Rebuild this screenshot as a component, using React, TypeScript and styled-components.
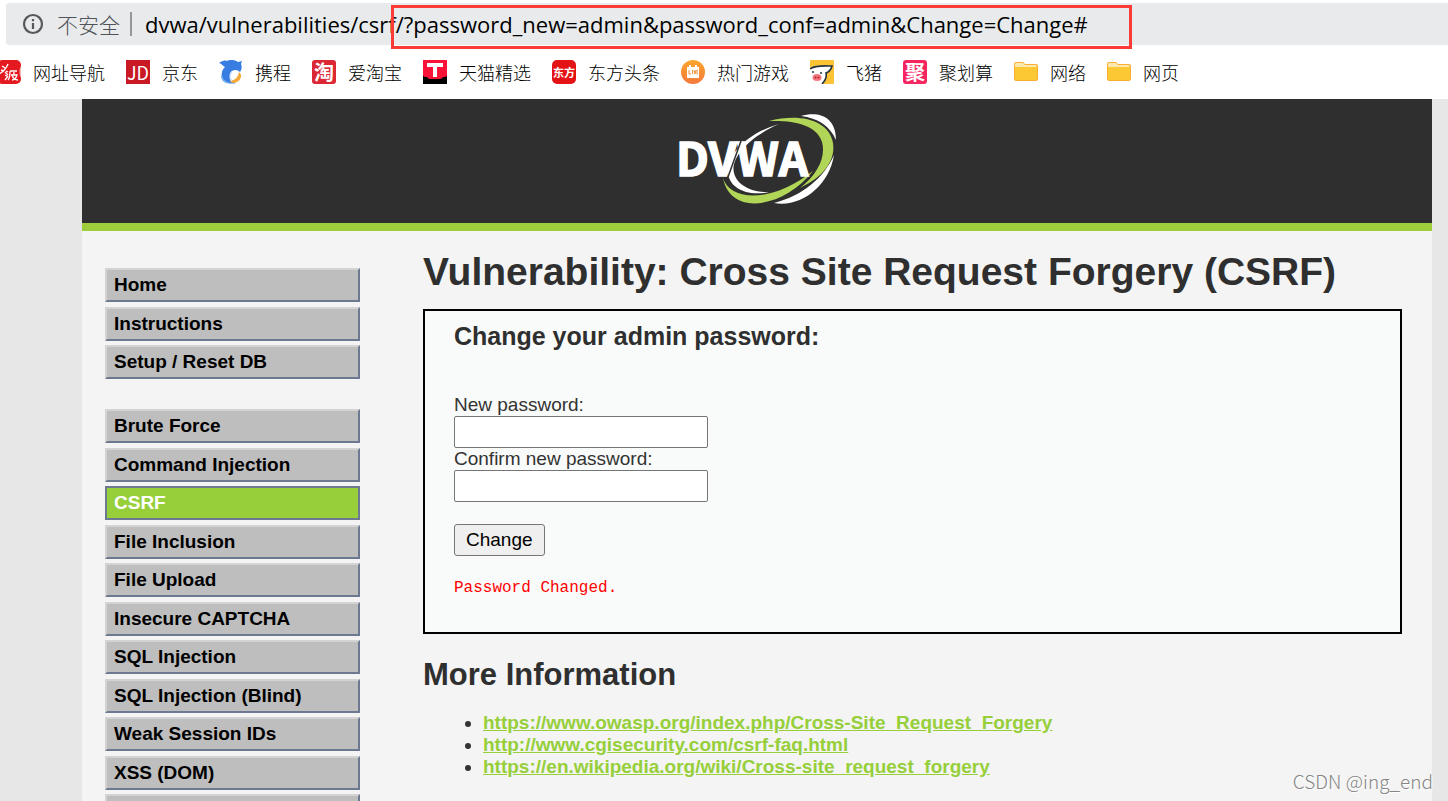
import React from "react";
import styled, { createGlobalStyle, css } from "styled-components";

const sans = `"Liberation Sans", Arial, sans-serif`;
const ui = `"Open Sans", "Noto Sans CJK SC", sans-serif`;
const cjk = `"Noto Sans CJK SC", sans-serif`;

const GlobalStyle = createGlobalStyle`
  *, *::before, *::after { box-sizing: border-box; }
  body { margin: 0; background: #e7e7e7; }
  h1, h2, h3, ul, p { margin: 0; padding: 0; }
`;

const Window = styled.div`
  height: 100vh;
  display: flex;
  flex-direction: column;
  overflow: hidden;
  position: relative;
`;

const BrowserBar = styled.header`
  flex: none;
  background: #fff;
  padding-top: 3px;
`;

const AddressRow = styled.div`
  display: flex;
  align-items: center;
  height: 42px;
  margin-left: 6px;
  padding-left: 16px;
  border-radius: 3px 0 0 3px;
  background: #e8eaeb;
  position: relative;
`;

const Security = styled.button`
  display: flex;
  align-items: center;
  gap: 13px;
  padding: 0;
  border: 0;
  background: none;
  color: #505357;
  font: 300 21px/28px ${cjk};
`;

const Divider = styled.span`
  width: 2px;
  height: 24px;
  margin: 0 13px 0 10px;
  background: #94979b;
`;

const Address = styled.input`
  flex: 1;
  min-width: 0;
  padding: 0;
  border: 0;
  outline: 0;
  background: none;
  color: #000;
  font: 22px/30px ${ui};
`;

const Highlight = styled.div`
  position: absolute;
  top: 2px;
  left: 385px;
  width: 741px;
  height: 44px;
  border: 3px solid #fb3b38;
  pointer-events: none;
`;

const Bookmarks = styled.nav`
  display: flex;
  align-items: center;
  gap: 21px;
  height: 54px;
  margin-left: -3px;
`;

const Bookmark = styled.a`
  display: flex;
  align-items: center;
  gap: 12px;
  flex: none;
  color: #000;
  text-decoration: none;
  font: 300 18px/26px ${cjk};
`;

const Tile = styled.span<{ $bg: string; $radius?: number; $size?: number; $weight?: number }>`
  display: flex;
  align-items: center;
  justify-content: center;
  width: 24px;
  height: 24px;
  white-space: nowrap;
  border-radius: ${(p) => p.$radius ?? 0}px;
  background: ${(p) => p.$bg};
  color: #fff;
  font: ${(p) => p.$weight ?? 700} ${(p) => p.$size ?? 18}px/24px ${cjk};
`;

const Site = styled.div`
  flex: 1;
  min-height: 0;
  display: flex;
  flex-direction: column;
  margin: 0 16px 0 82px;
  background: #f4f4f4;
`;

const Banner = styled.header`
  flex: none;
  display: flex;
  justify-content: center;
  height: 132px;
  padding-top: 15px;
  background: #2f2f2f;
  border-bottom: 8px solid #9fce3c;
`;

const Columns = styled.div`
  display: flex;
  flex: 1;
  min-height: 0;
  padding: 0 30px 0 23px;
`;

const Menu = styled.nav`
  flex: none;
  width: 255px;
  margin-right: 63px;
  padding-top: 37px;
`;

const MenuGroup = styled.ul`
  list-style: none;
  & + & { margin-top: 30px; }
`;

const MenuRow = styled.li`
  &:nth-child(odd):not(:last-child) { margin-bottom: 5px; }
  &:nth-child(even) { margin-bottom: 4px; }
`;

const MenuLink = styled.a<{ $active?: boolean }>`
  display: block;
  height: 34px;
  padding-left: 7px;
  border: 2px solid;
  border-color: #d3d3d3 #6d7990 #6d7990 #d3d3d3;
  background: #bebebe;
  color: #000;
  font: 700 19px/30px ${sans};
  text-decoration: none;
  ${(p) =>
    p.$active &&
    css`
      border-color: #6d7990;
      background: #96cf3a;
      color: #fff;
    `}
`;

const Main = styled.main`
  flex: 1;
  min-width: 0;
  padding-top: 19px;
  color: #333;
  font: 19px/22px ${sans};
`;

const Title = styled.h1`
  font-size: 39px;
  line-height: 44px;
  color: #2f2f2f;
  white-space: nowrap;
`;

const Panel = styled.section`
  margin-top: 15px;
  padding: 11px 29px 33px;
  border: 2px solid #000;
  background: #f9fbfa;
`;

const PanelTitle = styled.h3`
  margin-bottom: 44px;
  color: #2f2f2f;
  font-size: 25px;
  line-height: 28px;
`;

const Field = styled.label`
  display: block;
`;

const PasswordInput = styled.input`
  display: block;
  width: 254px;
  height: 32px;
  border: 1px solid #767676;
  border-radius: 2px;
  background: #fff;
`;

const Submit = styled.button`
  display: block;
  height: 32px;
  margin-top: 22px;
  padding: 0 11px;
  border: 1px solid #767676;
  border-radius: 3px;
  background: #efefef;
  color: #000;
  font: 19px/30px ${sans};
`;

const Message = styled.p`
  margin-top: 21px;
  color: #ff0000;
  font: 16px/22px "Liberation Mono", monospace;
`;

const SectionTitle = styled.h2`
  margin: 23px 0 19px;
  color: #2f2f2f;
  font-size: 31px;
  line-height: 36px;
`;

const Links = styled.ul`
  padding-left: 60px;
`;

const ExternalLink = styled.a`
  color: #96cf3a;
  font-weight: 700;
`;

const Watermark = styled.div`
  position: absolute;
  right: 15px;
  bottom: 8px;
  color: #858585;
  font: 300 19px/24px ${cjk};
  text-shadow: 1px 1px 0 #fff;
`;

const InfoIcon = () => (
  <svg width="22" height="22" viewBox="0 0 22 22" aria-hidden="true">
    <circle cx="11" cy="11" r="9" fill="none" stroke="#55585c" strokeWidth="2.2" />
    <path d="M11 10v6M11 6v2.2" stroke="#55585c" strokeWidth="2.2" />
  </svg>
);

const NewsIcon = () => (
  <svg width="24" height="24" viewBox="0 0 24 24" aria-hidden="true">
    <rect width="24" height="24" rx="5" fill="#e51a21" />
    <path d="M5 6l3 2M4 10l3 1M11 4C9 9 6 12 2 14M8 12l3 3" stroke="#fff" strokeWidth="1.4" fill="none" />
    <path d="M9 11l2 1M8 15l2 1M8 20l3-4M13 11h7M13 11c0 4 0 7-2 9M14 15h6c-1 3-3 5-5 5M15 15c1 3 3 5 6 5M17 12v3" stroke="#fff" strokeWidth="1.3" fill="none" />
    <path d="M24 6v12c-2-3-2-9 0-12" fill="#f8b4ad" />
  </svg>
);

const DolphinIcon = () => (
  <svg width="24" height="24" viewBox="0 0 24 24" aria-hidden="true">
    <path d="M0 3C3 1 5 0 8 1c4-2 8-1 11 1l4-1-1 3c1 2 1 5-1 8-2-2-5-3-8-1-3 2-2 6-1 8 1 2 3 3 5 4-6 2-13-1-14-7C2 12 4 9 6 7 4 6 2 3 0 3z" fill="#377de2" />
    <path d="M20 12c4 3 2 10-5 11-3 0-4-1-4-3 4 1 8-2 9-8z" fill="#f6a836" />
    <path d="M2 14c1 5 5 8 10 9-6 2-11-3-10-9z" fill="#71aef2" />
    <path d="M13 12c-3 3-2 7 0 9" fill="none" stroke="#d7e7fb" strokeWidth="1.5" />
  </svg>
);

const TmallIcon = () => (
  <svg width="24" height="24" viewBox="0 0 24 24" aria-hidden="true">
    <rect width="24" height="24" fill="#000" />
    <path d="M0 0h24v15c0 2-2 2-4 2-1 2-3 2-4 2H8c-1 0-3 0-4-2-2 0-4 0-4-2z" fill="#fb1239" />
    <path d="M4 3h16v4h-6v10h-4V7H4z" fill="#fff" />
  </svg>
);

const LiveIcon = () => (
  <svg width="24" height="24" viewBox="0 0 24 24" aria-hidden="true">
    <defs>
      <linearGradient id="live" x1="0" y1="0" x2="0" y2="1">
        <stop offset="0" stopColor="#fba62b" />
        <stop offset="1" stopColor="#f5793b" />
      </linearGradient>
    </defs>
    <circle cx="12" cy="12" r="12" fill="url(#live)" />
    <path d="M6 7h2V5h2v2h4V5h2v2h2v11H6z" fill="#fff" />
    <path d="M8 10v4h2M11.500 10v4M13 10l1 4 1-4M17 10h-1v4h1" fill="none" stroke="#f6923a" />
  </svg>
);

const PigIcon = () => (
  <svg width="24" height="24" viewBox="0 0 24 24" aria-hidden="true">
    <rect width="24" height="24" rx="1" fill="#fcc435" />
    <path d="M0 8c5-3 13-2 22-2-1 4-3 6-6 7 1 4-1 8-4 11H0z" fill="#fff" />
    <path d="M0 9c5-4 14-3 22-3-1 4-3 6-6 7 1 4-1 8-4 11" fill="none" stroke="#26333c" strokeWidth="1.6" />
    <ellipse cx="7" cy="17.500" rx="4.500" ry="3.500" fill="#f4777d" />
    <circle cx="5.500" cy="17.500" r="1" fill="#a82130" />
    <circle cx="8.500" cy="17.500" r="1" fill="#a82130" />
    <circle cx="3" cy="12" r="1" fill="#26333c" />
    <circle cx="11" cy="13" r="1" fill="#26333c" />
  </svg>
);

const FolderIcon = () => (
  <svg width="24" height="24" viewBox="0 0 24 24" aria-hidden="true">
    <path d="M0 4c0-1 1-2 2-2h7l2 2h11c1 0 2 1 2 2v13c0 1-1 2-2 2H2c-1 0-2-1-2-2z" fill="#f9ae32" />
    <path d="M1 5c0-1 0-2 1-2h7l2 2h11l1 2H1z" fill="#fde8b0" />
    <path d="M1 7h22v11c0 1 0 2-1 2H2c-1 0-1-1-1-2z" fill="#fcc934" />
  </svg>
);

const DvwaLogo = () => (
  <svg width="158" height="90" viewBox="0 0 158 90" role="img" aria-label="DVWA">
    <path d="M91 7C122-1 151 6 155 29C158 50 141 65 122 74C140 60 148 43 144 28C139 11 116 6 91 7z" fill="#b0d557" />
    <path d="M123 2C141-3 158 3 158 26C152 12 140 4 123 2z" fill="#fff" />
    <path d="M156 41C151 72 123 94 96 89C124 82 146 64 156 41z" fill="#fff" />
    <path d="M45 64C51 86 92 91 135 57C107 93 53 104 45 64z" fill="#b0d557" />
    <path d="M101 10C71 23 52 44 56 59C59 72 76 79 91 78C70 83 49 74 50 56C51 37 73 18 101 10z" fill="#fff" />
    <text
      x="-2"
      y="62"
      fill="#fff"
      stroke="#fff"
      strokeWidth="1.5"
      fontFamily="Noto Sans CJK SC, sans-serif"
      fontWeight="700"
      fontSize="46"
    >
      DVWA
    </text>
    <path d="M50 63L63 27" stroke="#2f2f2f" strokeWidth="1.5" />
  </svg>
);

const bookmarks: { label: string; icon: React.ReactNode }[] = [
  { label: "网址导航", icon: <NewsIcon /> },
  { label: "京东", icon: <Tile $bg="#c91925" $weight={400}>JD</Tile> },
  { label: "携程", icon: <DolphinIcon /> },
  { label: "爱淘宝", icon: <Tile $bg="#dc2735" $radius={3} $size={20}>淘</Tile> },
  { label: "天猫精选", icon: <TmallIcon /> },
  { label: "东方头条", icon: <Tile $bg="#e41416" $radius={5} $size={11}>东方</Tile> },
  { label: "热门游戏", icon: <LiveIcon /> },
  { label: "飞猪", icon: <PigIcon /> },
  { label: "聚划算", icon: <Tile $bg="#f5265f" $radius={3} $size={20}>聚</Tile> },
  { label: "网络", icon: <FolderIcon /> },
  { label: "网页", icon: <FolderIcon /> },
];

const menu: string[][] = [
  ["Home", "Instructions", "Setup / Reset DB"],
  [
    "Brute Force",
    "Command Injection",
    "CSRF",
    "File Inclusion",
    "File Upload",
    "Insecure CAPTCHA",
    "SQL Injection",
    "SQL Injection (Blind)",
    "Weak Session IDs",
    "XSS (DOM)",
    "",
  ],
];

const links = [
  "https://www.owasp.org/index.php/Cross-Site_Request_Forgery",
  "http://www.cgisecurity.com/csrf-faq.html",
  "https://en.wikipedia.org/wiki/Cross-site_request_forgery",
];

export default function App() {
  return (
    <Window>
      <GlobalStyle />
      <BrowserBar>
        <AddressRow>
          <Security type="button">
            <InfoIcon />
            不安全
          </Security>
          <Divider />
          <Address
            type="text"
            aria-label="Address"
            defaultValue="dvwa/vulnerabilities/csrf/?password_new=admin&password_conf=admin&Change=Change#"
          />
          <Highlight />
        </AddressRow>
        <Bookmarks>
          {bookmarks.map((b) => (
            <Bookmark href="#" key={b.label}>
              {b.icon}
              {b.label}
            </Bookmark>
          ))}
        </Bookmarks>
      </BrowserBar>
      <Site>
        <Banner>
          <DvwaLogo />
        </Banner>
        <Columns>
          <Menu>
            {menu.map((group) => (
              <MenuGroup key={group[0]}>
                {group.map((item) => (
                  <MenuRow key={item}>
                    <MenuLink href="#" $active={item === "CSRF"}>
                      {item}
                    </MenuLink>
                  </MenuRow>
                ))}
              </MenuGroup>
            ))}
          </Menu>
          <Main>
            <Title>Vulnerability: Cross Site Request Forgery (CSRF)</Title>
            <Panel>
              <PanelTitle>Change your admin password:</PanelTitle>
              <form onSubmit={(e) => e.preventDefault()}>
                <Field htmlFor="password-new">New password:</Field>
                <PasswordInput id="password-new" type="password" />
                <Field htmlFor="password-conf">Confirm new password:</Field>
                <PasswordInput id="password-conf" type="password" />
                <Submit type="submit">Change</Submit>
              </form>
              <Message>Password Changed.</Message>
            </Panel>
            <SectionTitle>More Information</SectionTitle>
            <Links>
              {links.map((url) => (
                <li key={url}>
                  <ExternalLink href={url}>{url}</ExternalLink>
                </li>
              ))}
            </Links>
          </Main>
        </Columns>
      </Site>
      <Watermark>CSDN @ing_end</Watermark>
    </Window>
  );
}
